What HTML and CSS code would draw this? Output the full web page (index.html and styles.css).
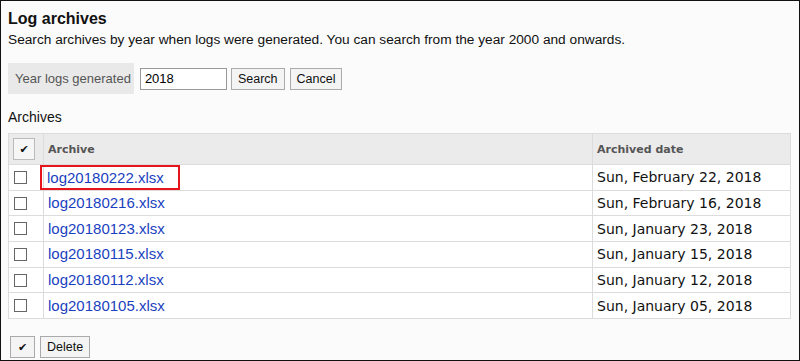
FILE: index.html
```html
<!DOCTYPE html>
<html lang="en">
<head>
    <meta charset="UTF-8">
    <title>Log archives</title>
    <link rel="stylesheet" href="styles.css">
</head>
<body>
    <div class="page">
        <h1>Log archives</h1>
        <p class="intro">Search archives by year when logs were generated. You can search from the year 2000 and onwards.</p>
        <form class="search">
            <span class="search-label">Year logs generated</span>
            <input type="text" class="year" value="2018">
            <button type="button" class="btn">Search</button>
            <button type="button" class="btn">Cancel</button>
        </form>
        <div class="section">Archives</div>
        <table class="list">
            <tr class="head">
                <th class="col-check"><span class="check-all">&#10004;</span></th>
                <th class="col-name">Archive</th>
                <th class="col-date">Archived date</th>
            </tr>
            <tr>
                <td class="col-check"><span class="box"></span></td>
                <td class="col-name"><a href="#" class="marked">log20180222.xlsx</a></td>
                <td class="col-date">Sun, February 22, 2018</td>
            </tr>
            <tr>
                <td class="col-check"><span class="box"></span></td>
                <td class="col-name"><a href="#">log20180216.xlsx</a></td>
                <td class="col-date">Sun, February 16, 2018</td>
            </tr>
            <tr>
                <td class="col-check"><span class="box"></span></td>
                <td class="col-name"><a href="#">log20180123.xlsx</a></td>
                <td class="col-date">Sun, January 23, 2018</td>
            </tr>
            <tr>
                <td class="col-check"><span class="box"></span></td>
                <td class="col-name"><a href="#">log20180115.xlsx</a></td>
                <td class="col-date">Sun, January 15, 2018</td>
            </tr>
            <tr>
                <td class="col-check"><span class="box"></span></td>
                <td class="col-name"><a href="#">log20180112.xlsx</a></td>
                <td class="col-date">Sun, January 12, 2018</td>
            </tr>
            <tr>
                <td class="col-check"><span class="box"></span></td>
                <td class="col-name"><a href="#">log20180105.xlsx</a></td>
                <td class="col-date">Sun, January 05, 2018</td>
            </tr>
        </table>
        <div class="actions">
            <button type="button" class="btn btn-check">&#10004;</button>
            <button type="button" class="btn">Delete</button>
        </div>
    </div>
</body>
</html>
```

FILE: styles.css
```css
html, body {
    margin: 0;
    padding: 0;
}
body {
    font-family: "Liberation Sans", Arial, sans-serif;
    color: #111;
    background-color: #fff;
}
.page {
    box-sizing: border-box;
    width: 800px;
    height: 361px;
    border: 1px solid #111;
    background-color: #fbfbfb;
    padding: 7px 7px 0 7px;
    overflow: hidden;
}
h1 {
    margin: 0;
    font-size: 16px;
    line-height: 20px;
    padding-top: 1px;
}
.intro {
    margin: 2px 0 0 0;
    font-size: 13.7px;
    line-height: 18px;
}
.search {
    display: flex;
    align-items: center;
    margin-top: 14px;
    height: 31px;
}
.search-label {
    display: flex;
    align-items: center;
    height: 31px;
    padding: 0 3px 0 7px;
    background-color: #e9e9e9;
    color: #555;
    font-size: 13px;
    margin-right: 6px;
}
.year {
    box-sizing: border-box;
    width: 87px;
    height: 22px;
    border: 1px solid #999;
    background: #fff;
    font-family: "Liberation Sans", Arial, sans-serif;
    font-size: 13px;
    padding: 2px 4px;
    margin: 0 4px 0 0;
}
.btn {
    box-sizing: border-box;
    height: 22px;
    border: 1px solid #aaa;
    background-color: #f4f4f4;
    font-family: "Liberation Sans", Arial, sans-serif;
    font-size: 12.5px;
    color: #111;
    padding: 0 6px;
    margin: 0 5px 0 0;
    cursor: pointer;
}
.section {
    font-size: 14px;
    margin-top: 14px;
    line-height: 18px;
}
.list {
    margin-top: 7px;
    width: 783px;
    border-collapse: collapse;
    border: 1px solid #d6d6d6;
}
.list th, .list td {
    border: 1px solid #dcdcdc;
    padding: 0 4px;
    text-align: left;
}
.head th {
    height: 30px;
    background-color: #ebebeb;
    font-family: "DejaVu Sans", Verdana, sans-serif;
    font-size: 11px;
    color: #555;
}
.list td {
    height: 24.7px;
    background-color: #fff;
}
.col-check {
    width: 26px;
}
.col-date {
    width: 189px;
    font-family: "DejaVu Sans", Tahoma, sans-serif;
    font-size: 14px;
    color: #111;
}
.list a {
    font-size: 15px;
    color: #1a3fc0;
    text-decoration: none;
}
.list a.marked {
    outline: 2px solid #e8141b;
    outline-offset: 0;
    display: inline-block;
    padding: 2px 14px 2px 5px;
    margin-left: -6px;
}
.check-all {
    display: flex;
    align-items: center;
    justify-content: center;
    box-sizing: border-box;
    width: 22px;
    height: 22px;
    border: 1px solid #bbb;
    background-color: #f6f6f6;
    color: #111;
    font-size: 11px;
}
.box {
    display: block;
    box-sizing: border-box;
    width: 13px;
    height: 13px;
    margin-left: 1px;
    border: 1px solid #666;
    background-color: #fff;
}
.actions {
    display: flex;
    margin-top: 17px;
    padding-left: 2px;
}
.btn-check {
    width: 25px;
    padding: 0;
    font-size: 11px;
}
```
